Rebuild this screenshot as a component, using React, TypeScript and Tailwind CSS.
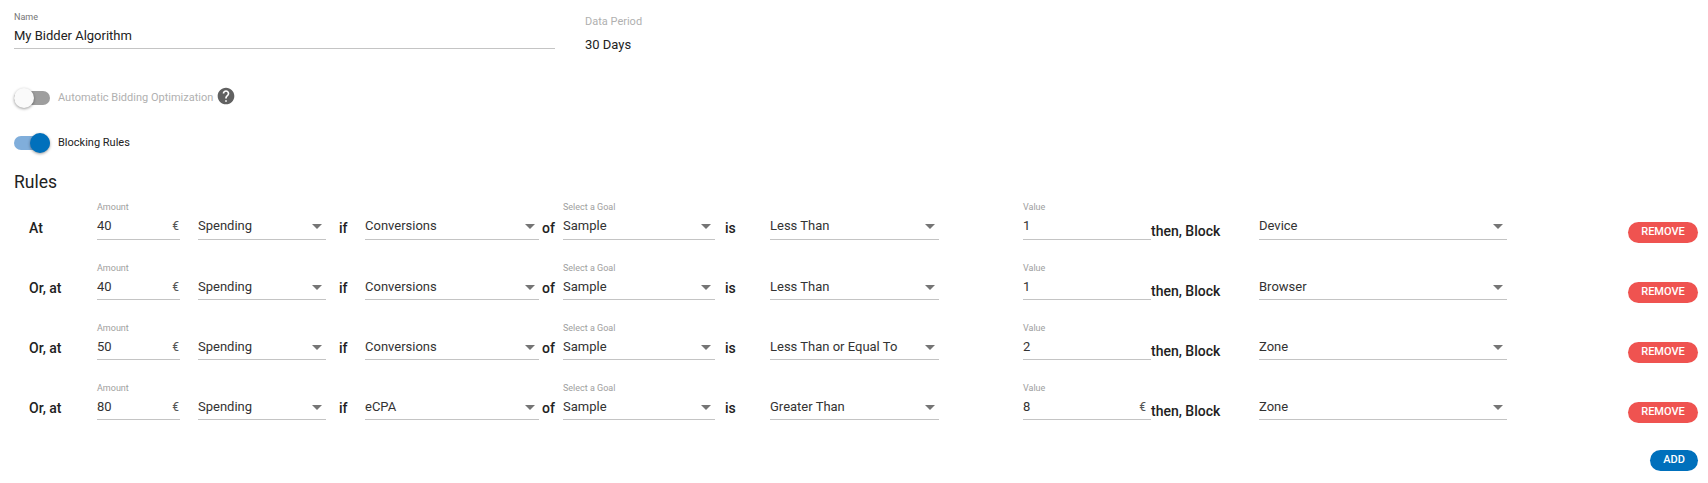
import React from 'react';

const rules = [
  { lead: 'At', amount: '40', metric: 'Conversions', op: 'Less Than', value: '1', block: 'Device', euro: false },
  { lead: 'Or, at', amount: '40', metric: 'Conversions', op: 'Less Than', value: '1', block: 'Browser', euro: false },
  { lead: 'Or, at', amount: '50', metric: 'Conversions', op: 'Less Than or Equal To', value: '2', block: 'Zone', euro: false },
  { lead: 'Or, at', amount: '80', metric: 'eCPA', op: 'Greater Than', value: '8', block: 'Zone', euro: true },
];

function Field({ label, value, width, suffix, arrow }: { label?: string; value: string; width: string; suffix?: string; arrow?: boolean }) {
  return (
    <div className={`${width} shrink-0 flex flex-col`}>
      <div className="h-[12px] text-[9px] leading-[12px] text-[#9e9e9e]">{label}</div>
      <div className="mt-[3px] flex-1 flex items-start justify-between border-b border-[#c4c4c4] text-[13px] leading-[20px] text-[#333]">
        <span>{value}</span>
        {suffix && <span className={`text-[12px] text-[#555] ${suffix}`}>€</span>}
        {arrow && <span className="mt-[8px] mr-[4px] w-0 h-0 border-x-[5px] border-x-transparent border-t-[5px] border-t-[#757575]" />}
      </div>
    </div>
  );
}

function Word({ text, className }: { text: string; className: string }) {
  return <div className={`${className} shrink-0 self-end text-[14px] font-medium text-[#222]`}>{text}</div>;
}

export default function App() {
  return (
    <div className="w-[1708px] h-[483px] bg-white overflow-hidden pl-[14px] pr-[10px] font-['Roboto',sans-serif]">
      <div className="flex pt-[11px]">
        <div className="w-[541px]">
          <div className="h-[12px] text-[9px] leading-[12px] text-[#757575]">Name</div>
          <div className="mt-[3px] h-[23px] border-b border-[#c4c4c4] text-[13px] leading-[20px] text-[#222]">My Bidder Algorithm</div>
        </div>
        <div className="ml-[30px] pt-[4px]">
          <div className="text-[11px] leading-[14px] text-[#b0b0b0]">Data Period</div>
          <div className="mt-[8px] text-[13px] leading-[16px] text-[#222]">30 Days</div>
        </div>
      </div>

      <div className="mt-[33px] flex items-center h-[24px]">
        <div className="relative w-[36px] h-[14px] rounded-full bg-[#9e9e9e]">
          <div className="absolute left-0 top-[-3px] w-[20px] h-[20px] rounded-full bg-[#fafafa] shadow-[0_1px_3px_rgba(0,0,0,0.4)]" />
        </div>
        <span className="ml-[8px] text-[11px] text-[#b0b0b0]">Automatic Bidding Optimization</span>
        <svg className="ml-[3px] w-[20px] h-[20px] mt-[-4px]" viewBox="0 0 24 24" fill="#616161">
          <path d="M12 2C6.48 2 2 6.48 2 12s4.48 10 10 10 10-4.48 10-10S17.52 2 12 2zm1 17h-2v-2h2v2zm2.07-7.75l-.9.92C13.45 12.9 13 13.5 13 15h-2v-.5c0-1.1.45-2.1 1.17-2.83l1.24-1.26c.37-.36.59-.86.59-1.41 0-1.1-.9-2-2-2s-2 .9-2 2H8c0-2.21 1.79-4 4-4s4 1.79 4 4c0 .88-.36 1.68-.93 2.25z" />
        </svg>
      </div>

      <div className="mt-[21px] flex items-center h-[24px]">
        <div className="relative w-[36px] h-[14px] rounded-full bg-[#80aedb]">
          <div className="absolute right-0 top-[-3px] w-[20px] h-[20px] rounded-full bg-[#0070bc] shadow-[0_1px_3px_rgba(0,0,0,0.4)]" />
        </div>
        <span className="ml-[8px] text-[11px] text-[#222]">Blocking Rules</span>
      </div>

      <div className="mt-[17px] text-[17.5px] leading-[20px] text-[#222]">Rules</div>

      <div>
        {rules.map((rule, i) => (
          <div key={i} className="flex h-[60px] items-start">
            {/* first row sits a pixel higher in the source, its underline does not */}
            <div className={i === 0 ? 'flex items-stretch h-[39px] mt-[9px]' : 'flex items-stretch h-[38px] mt-[10px]'}>
              <Word text={rule.lead} className="w-[83px] pb-[2px] pl-[15px] leading-[20px]" />
              <Field label="Amount" value={rule.amount} width="w-[83px]" suffix="pr-[1px]" />
              <div className="w-[18px] shrink-0" />
              <Field value="Spending" width="w-[128px]" arrow />
              <Word text="if" className="w-[39px] pb-[2px] pl-[13px] leading-[20px]" />
              <Field value={rule.metric} width="w-[174px]" arrow />
              <Word text="of" className="w-[24px] pb-[2px] pl-[3px] leading-[20px]" />
              <Field label="Select a Goal" value="Sample" width="w-[152px]" arrow />
              <Word text="is" className="w-[55px] pb-[2px] pl-[10px] leading-[20px]" />
              <Field value={rule.op} width="w-[169px]" arrow />
              <div className="w-[84px] shrink-0" />
              <Field label="Value" value={rule.value} width="w-[128px]" suffix={rule.euro ? 'pr-[5px]' : undefined} />
              <Word text="then, Block" className="w-[70px] leading-[18px]" />
              <div className="w-[38px] shrink-0" />
              <Field value={rule.block} width="w-[248px]" arrow />
            </div>
            <button className="ml-auto mt-[30px] w-[70px] h-[21px] rounded-full bg-[#ef5350] text-[11px] font-medium uppercase text-white">Remove</button>
          </div>
        ))}
      </div>

      <div className="flex justify-end mt-[18px]">
        <button className="w-[48px] h-[21px] rounded-full bg-[#0070bc] text-[11px] font-medium uppercase text-white">Add</button>
      </div>
    </div>
  );
}
